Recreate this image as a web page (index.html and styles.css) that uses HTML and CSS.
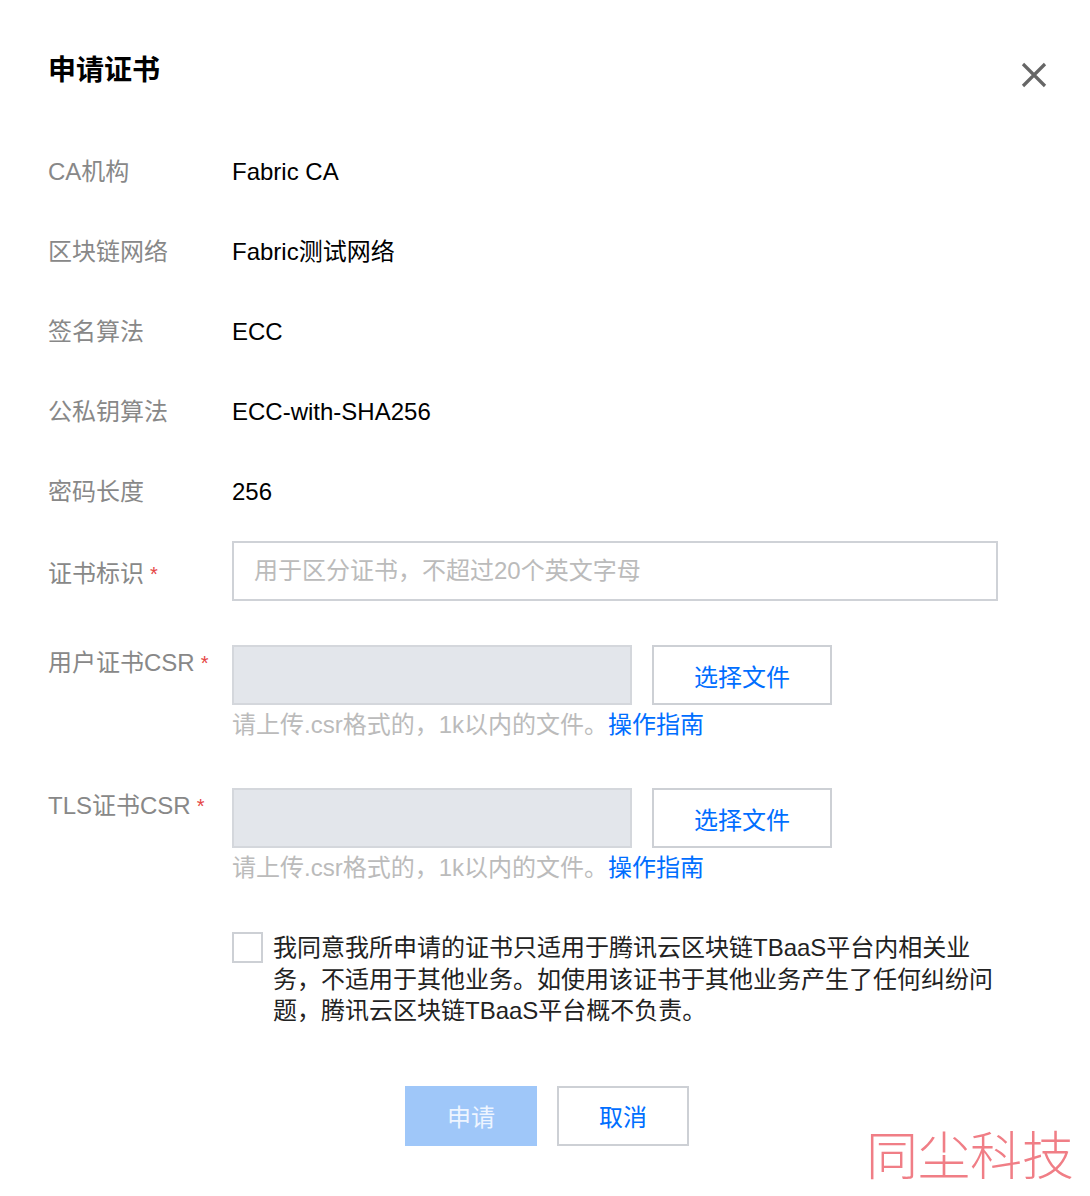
FILE: index.html
```html
<!DOCTYPE html>
<html lang="zh-CN">
<head>
<meta charset="utf-8">
<title>申请证书</title>
<link rel="stylesheet" href="styles.css">
</head>
<body>
<div class="dialog">
  <div class="dialog-header">
    <h1 class="dialog-title">申请证书</h1>
    <button class="close-btn" aria-label="关闭">
      <svg width="26" height="26" viewBox="0 0 26 26"><path d="M2 2 L24 24 M24 2 L2 24" stroke="#666" stroke-width="3.2" fill="none"/></svg>
    </button>
  </div>

  <div class="info-list">
    <div class="info-row"><span class="label">CA机构</span><span class="value">Fabric CA</span></div>
    <div class="info-row"><span class="label">区块链网络</span><span class="value">Fabric测试网络</span></div>
    <div class="info-row"><span class="label">签名算法</span><span class="value">ECC</span></div>
    <div class="info-row"><span class="label">公私钥算法</span><span class="value">ECC-with-SHA256</span></div>
    <div class="info-row"><span class="label">密码长度</span><span class="value">256</span></div>
  </div>

  <div class="form-row form-row-input">
    <span class="label">证书标识<i class="req">*</i></span>
    <div class="text-input">用于区分证书，不超过20个英文字母</div>
  </div>

  <div class="form-row form-row-file">
    <span class="label label-top">用户证书CSR<i class="req">*</i></span>
    <div class="file-field">
      <div class="file-line">
        <div class="file-box"></div>
        <button class="btn btn-outline">选择文件</button>
      </div>
      <div class="help">请上传.csr格式的，1k以内的文件。<a class="link">操作指南</a></div>
    </div>
  </div>

  <div class="form-row form-row-file form-row-tls">
    <span class="label label-top">TLS证书CSR<i class="req">*</i></span>
    <div class="file-field">
      <div class="file-line">
        <div class="file-box"></div>
        <button class="btn btn-outline">选择文件</button>
      </div>
      <div class="help">请上传.csr格式的，1k以内的文件。<a class="link">操作指南</a></div>
    </div>
  </div>

  <div class="agree">
    <span class="checkbox"></span>
    <p class="agree-text">我同意我所申请的证书只适用于腾讯云区块链TBaaS平台内相关业<br>务，不适用于其他业务。如使用该证书于其他业务产生了任何纠纷问<br>题，腾讯云区块链TBaaS平台概不负责。</p>
  </div>

  <div class="actions">
    <button class="btn btn-primary-disabled">申请</button>
    <button class="btn btn-outline">取消</button>
  </div>
</div>
<div class="watermark">同尘科技</div>
</body>
</html>
```

FILE: styles.css
```css
html, body {
  margin: 0;
  padding: 0;
  background: #fff;
  width: 1090px;
  height: 1196px;
  overflow: hidden;
}
body {
  font-family: "Liberation Sans", "Noto Sans CJK SC", sans-serif;
  font-size: 24px;
  color: #000;
  position: relative;
}
.dialog {
  padding: 51px 44px 0 48px;
}
.dialog-header {
  display: flex;
  justify-content: space-between;
  align-items: flex-start;
  height: 40px;
}
.dialog-title {
  margin: 0;
  font-size: 28px;
  line-height: 40px;
  font-weight: bold;
  color: #000;
}
.close-btn {
  border: 0;
  background: none;
  padding: 0;
  margin-top: 11px;
  margin-right: -1px;
  width: 26px;
  height: 26px;
  cursor: pointer;
}
.close-btn svg { display: block; }

.info-list {
  margin-top: 61px;
  display: flex;
  flex-direction: column;
  gap: 40px;
}
.info-row {
  display: flex;
  line-height: 40px;
  height: 40px;
}
.label {
  width: 184px;
  flex: none;
  color: #888;
  white-space: nowrap;
}
.value { color: #000; }
.req {
  font-style: normal;
  color: #e54545;
  font-size: 20px;
  margin-left: 6px;
  vertical-align: 1px;
}

.form-row { display: flex; }
.form-row-input {
  margin-top: 29px;
  align-items: center;
}
.text-input {
  width: 766px;
  height: 60px;
  box-sizing: border-box;
  border: 2px solid #cfd2d7;
  padding: 0 20px;
  line-height: 56px;
  color: #bbb;
}
.form-row-file { margin-top: 44px; }
.form-row-tls { margin-top: 47px; }
.label-top { line-height: 36px; }
.file-line {
  display: flex;
  gap: 20px;
}
.file-box {
  width: 400px;
  height: 60px;
  box-sizing: border-box;
  background: #e3e6eb;
  border: 2px solid #d4d7dc;
}
.btn {
  font-family: "Liberation Sans", "Noto Sans CJK SC", sans-serif;
  font-size: 24px;
  width: 180px;
  height: 60px;
  box-sizing: border-box;
  cursor: pointer;
  padding: 0;
}
.btn-outline {
  background: #fff;
  border: 2px solid #cdd0d5;
  color: #006eff;
}
.help {
  margin-top: 4px;
  line-height: 32px;
  color: #bbb;
}
.link { color: #006eff; }

.agree {
  margin-top: 48px;
  margin-left: 184px;
  display: flex;
  gap: 10px;
}
.checkbox {
  flex: none;
  width: 31px;
  height: 31px;
  box-sizing: border-box;
  border: 2px solid #cdd0d5;
  background: #fff;
}
.agree-text {
  margin: 0;
  line-height: 31.5px;
  color: #222;
}
.actions {
  margin-top: 59px;
  display: flex;
  justify-content: center;
  gap: 20px;
}
.actions .btn { width: 132px; }
.btn-primary-disabled {
  background: #9fc7f9;
  border: 0;
  color: #eef5ff;
}
.watermark {
  position: absolute;
  right: 16px;
  bottom: 15px;
  font-family: "Noto Sans CJK SC", serif;
  font-weight: 300;
  font-size: 52px;
  line-height: 56px;
  color: #f07e86;
}
```
